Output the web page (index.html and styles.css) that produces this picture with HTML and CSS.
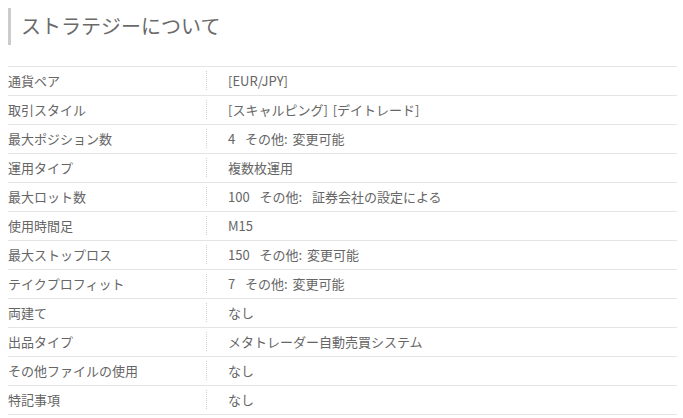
FILE: index.html
```html
<!DOCTYPE html>
<html lang="ja">
<head>
<meta charset="utf-8">
<link rel="stylesheet" href="styles.css">
</head>
<body>
<h2 class="title">ストラテジーについて</h2>
<div class="spec">
  <div class="row"><div class="label">通貨ペア</div><div class="value">[EUR/JPY]</div></div>
  <div class="row"><div class="label">取引スタイル</div><div class="value">[スキャルピング] [デイトレード]</div></div>
  <div class="row"><div class="label">最大ポジション数</div><div class="value">4&nbsp;&nbsp;その他: 変更可能</div></div>
  <div class="row"><div class="label">運用タイプ</div><div class="value">複数枚運用</div></div>
  <div class="row"><div class="label">最大ロット数</div><div class="value">100&nbsp;&nbsp;その他:&nbsp;&nbsp;証券会社の設定による</div></div>
  <div class="row"><div class="label">使用時間足</div><div class="value">M15</div></div>
  <div class="row"><div class="label">最大ストップロス</div><div class="value">150&nbsp;&nbsp;その他: 変更可能</div></div>
  <div class="row"><div class="label">テイクプロフィット</div><div class="value">7&nbsp;&nbsp;その他: 変更可能</div></div>
  <div class="row"><div class="label">両建て</div><div class="value">なし</div></div>
  <div class="row"><div class="label">出品タイプ</div><div class="value">メタトレーダー自動売買システム</div></div>
  <div class="row"><div class="label">その他ファイルの使用</div><div class="value">なし</div></div>
  <div class="row"><div class="label">特記事項</div><div class="value">なし</div></div>
</div>
</body>
</html>
```
FILE: styles.css
```css
html, body {
  margin: 0;
  padding: 0;
  background: #fff;
}
body {
  padding: 8px;
  font-family: "Noto Sans CJK JP", "Noto Sans", sans-serif;
  color: #666;
}
.title {
  margin: 0 0 21px 0;
  border-left: 3px solid #cccccc;
  padding-left: 10px;
  height: 37px;
  line-height: 35px;
  font-size: 20px;
  font-weight: normal;
  color: #6a6a6a;
}
.spec {
  width: 669px;
  border-top: 1px solid #e4e4e4;
  font-size: 13px;
}
.row {
  display: grid;
  grid-template-columns: 198px 1fr;
  padding: 4px 0 5px 0;
  border-bottom: 1px solid #e4e4e4;
}
.label, .value {
  line-height: 19px;
  height: 19px;
  white-space: nowrap;
}
.value {
  border-left: 1px dotted #d0d0d0;
  padding-left: 21px;
  word-spacing: 2px;
}
```
